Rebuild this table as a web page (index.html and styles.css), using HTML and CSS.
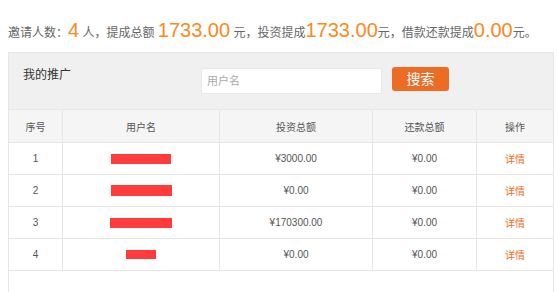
FILE: index.html
```html
<!DOCTYPE html>
<html lang="zh-CN">
<head>
<meta charset="utf-8">
<title>我的推广</title>
<link rel="stylesheet" href="styles.css">
</head>
<body>
<div class="page">
  <div class="summary">邀请人数：<span class="num">4</span> 人，提成总额 <span class="num">1733.00</span> 元，投资提成<span class="num">1733.00</span>元，借款还款提成<span class="num">0.00</span>元。</div>
  <div class="panel">
    <div class="panel-head">
      <div class="panel-title">我的推广</div>
      <input class="search-input" type="text" placeholder="用户名">
      <button class="search-btn" type="button">搜索</button>
    </div>
    <div class="grid">
      <div class="row head">
        <div class="cell">序号</div>
        <div class="cell">用户名</div>
        <div class="cell">投资总额</div>
        <div class="cell">还款总额</div>
        <div class="cell">操作</div>
      </div>
      <div class="row">
        <div class="cell">1</div>
        <div class="cell"><span class="mask" style="width:60px;height:10px"></span></div>
        <div class="cell">¥3000.00</div>
        <div class="cell">¥0.00</div>
        <div class="cell"><a class="link" href="#">详情</a></div>
      </div>
      <div class="row">
        <div class="cell">2</div>
        <div class="cell"><span class="mask" style="width:61px;height:11px"></span></div>
        <div class="cell">¥0.00</div>
        <div class="cell">¥0.00</div>
        <div class="cell"><a class="link" href="#">详情</a></div>
      </div>
      <div class="row">
        <div class="cell">3</div>
        <div class="cell"><span class="mask" style="width:62px;height:10px"></span></div>
        <div class="cell">¥170300.00</div>
        <div class="cell">¥0.00</div>
        <div class="cell"><a class="link" href="#">详情</a></div>
      </div>
      <div class="row">
        <div class="cell">4</div>
        <div class="cell"><span class="mask" style="width:30px;height:9px"></span></div>
        <div class="cell">¥0.00</div>
        <div class="cell">¥0.00</div>
        <div class="cell"><a class="link" href="#">详情</a></div>
      </div>
    </div>
  </div>
</div>
</body>
</html>
```
FILE: styles.css
```css
html, body {
  margin: 0;
  padding: 0;
  background: #fff;
  overflow: hidden;
}
body {
  font-family: "Liberation Sans", "Noto Sans CJK SC", sans-serif;
  color: #666;
}
.page {
  padding: 0 8px;
}
.summary {
  box-sizing: border-box;
  height: 52px;
  padding-top: 20px;
  font-size: 12px;
  line-height: 20px;
  color: #666;
  white-space: nowrap;
}
.num {
  font-size: 20px;
  line-height: 20px;
  color: #fb8a22;
}
.panel {
  box-sizing: border-box;
  width: 546px;
  height: 240px;
  border: 1px solid #e6e6e6;
  border-bottom: none;
  background: #fff;
}
.panel-head {
  display: flex;
  align-items: flex-start;
  height: 56px;
  padding-left: 14px;
  background: #f0f0f0;
  border-bottom: 1px solid #e8e8e8;
}
.panel-title {
  width: 178px;
  margin-top: 14px;
  font-size: 12px;
  line-height: 17px;
  color: #333;
}
.search-input {
  box-sizing: border-box;
  width: 181px;
  height: 26px;
  margin: 15px 0 0;
  padding: 0 5px;
  border: 1px solid #e8e8e8;
  border-radius: 2px;
  background: #fff;
  font-family: "Liberation Sans", "Noto Sans CJK SC", sans-serif;
  font-size: 11px;
  color: #333;
  outline: none;
}
.search-input::placeholder {
  color: #aaa;
}
.search-btn {
  width: 57px;
  height: 24px;
  margin: 14px 0 0 10px;
  padding: 0;
  border: none;
  border-radius: 3px;
  background: #ec6c24;
  color: #fff;
  font-family: "Liberation Sans", "Noto Sans CJK SC", sans-serif;
  font-size: 14px;
  line-height: 24px;
}
.row {
  display: grid;
  grid-template-columns: 54px 157px 153px 104px 76px;
  height: 32px;
}
.row.head {
  height: 33px;
  background: #f5f5f5;
}
.cell {
  display: flex;
  align-items: center;
  justify-content: center;
  box-sizing: border-box;
  border-right: 1px solid #e6e6e6;
  border-bottom: 1px solid #e6e6e6;
  font-size: 10px;
  color: #555;
}
.cell:last-child {
  border-right: none;
}
.mask {
  display: inline-block;
  background: #ff3b3b;
}
.link {
  color: #f26b1d;
  text-decoration: none;
}
```
